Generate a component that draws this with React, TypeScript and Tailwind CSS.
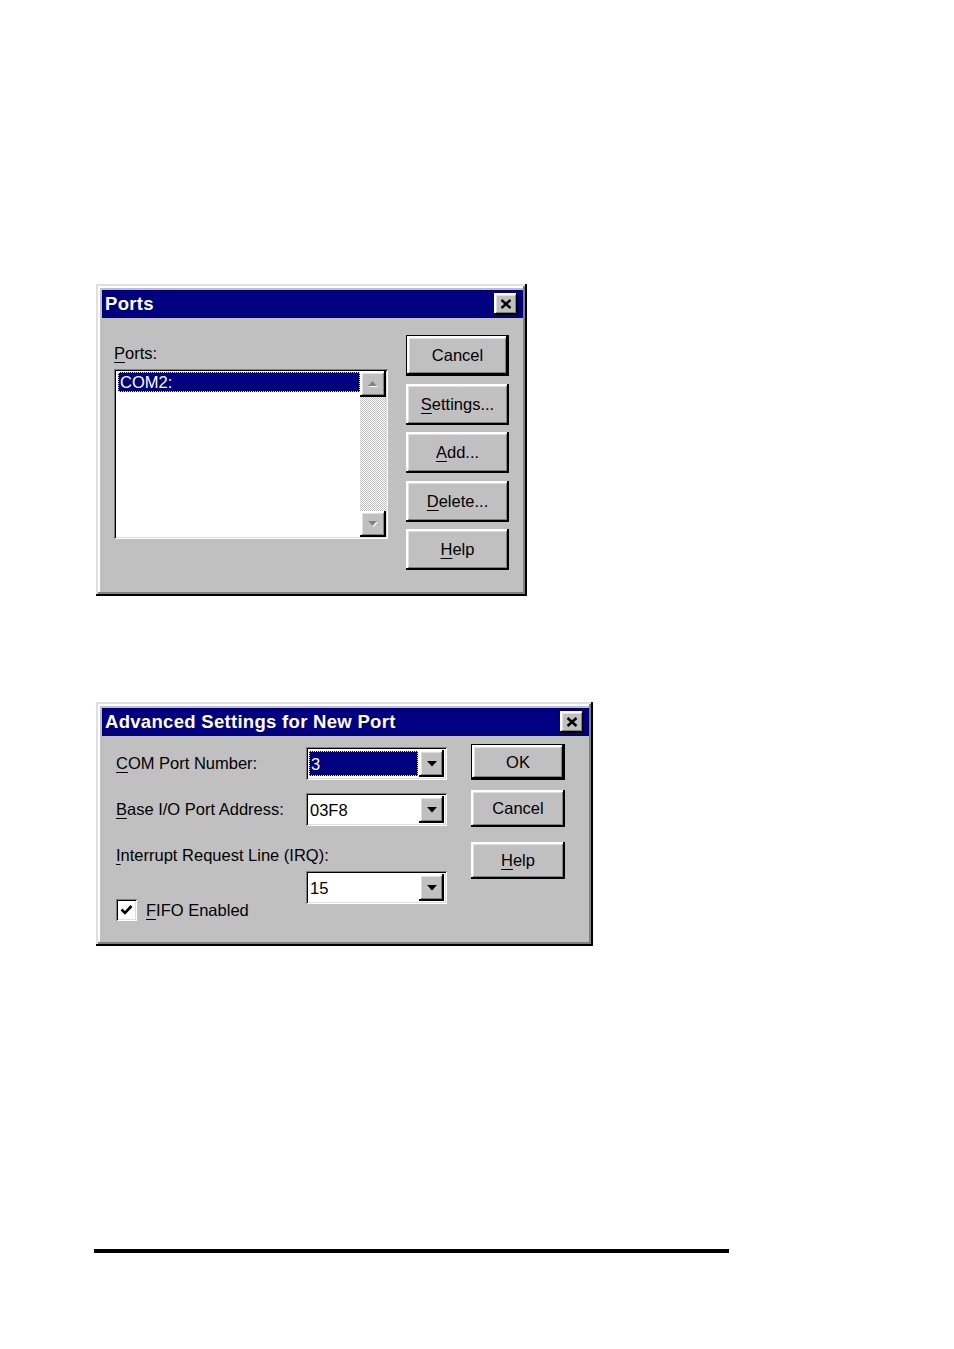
const raised =
  "shadow-[inset_-2px_-2px_0_#000,inset_2px_2px_0_#fff,inset_-3px_-3px_0_#808080,inset_3px_3px_0_#dfdfdf]";
const sunken =
  "shadow-[inset_1px_1px_0_#808080,inset_-1px_-1px_0_#fff,inset_2px_2px_0_#000,inset_-2px_-2px_0_#dfdfdf]";
const frame =
  "shadow-[inset_-2px_-2px_0_#000,inset_2px_2px_0_#dfdfdf,inset_-4px_-4px_0_#808080,inset_4px_4px_0_#fff]";

const U = ({ children }: { children: string }) => (
  <span className="underline underline-offset-[3px] decoration-1">{children}</span>
);

const CloseButton = () => (
  <div className={`w-[24px] h-[22px] bg-[#c0c0c0] flex items-center justify-center ${raised}`}>
    <svg width="12" height="10" viewBox="0 0 12 10">
      <path d="M1.5 1 L10.5 9 M10.5 1 L1.5 9" stroke="#000" strokeWidth="2.4" />
    </svg>
  </div>
);

const TitleBar = ({ title }: { title: string }) => (
  <div className="h-[28px] bg-[#000080] flex items-center justify-between pl-[3px] pr-[5px]">
    <span className="text-white font-bold text-[18.5px] leading-none tracking-[0.3px]">{title}</span>
    <CloseButton />
  </div>
);

const Button = ({
  children,
  className = "",
  isDefault = false,
}: {
  children: React.ReactNode;
  className?: string;
  isDefault?: boolean;
}) => (
  <div
    className={`bg-[#c0c0c0] flex items-center justify-center text-[16.5px] text-black ${
      isDefault ? "border border-black" : ""
    } ${className}`}
  >
    <div className={`w-full h-full flex items-center justify-center ${raised}`}>{children}</div>
  </div>
);

const ScrollArrow = ({ down = false }: { down?: boolean }) => (
  <div className={`h-[26px] bg-[#c0c0c0] flex items-center justify-center ${raised}`}>
    <svg width="12" height="8" viewBox="0 0 12 8">
      {down ? (
        <>
          <polygon points="2,2 11,2 6.5,7" fill="#fff" />
          <polygon points="1,1 10,1 5.5,6" fill="#808080" />
        </>
      ) : (
        <>
          <polygon points="2,7 11,7 6.5,2" fill="#fff" />
          <polygon points="1,6 10,6 5.5,1" fill="#808080" />
        </>
      )}
    </svg>
  </div>
);

const PortsDialog = () => (
  <div className={`w-[431px] h-[312px] bg-[#c0c0c0] pl-[6px] pt-[6px] pr-[4px] pb-[6px] ${frame}`}>
    <TitleBar title="Ports" />
    <div className="flex">
      {/* list */}
      <div className="ml-[12px] pt-[25px]">
        <div className="text-[16.5px] leading-[20px] text-black">
          <U>P</U>orts:
        </div>
        <div className={`mt-[6px] w-[274px] h-[170px] p-[2px] bg-white flex ${sunken}`}>
          <div className="flex-1 pt-[1px] pl-[2px]">
            <div className="h-[20px] bg-[#000080] border border-dotted border-[#ffff00] text-white text-[16.5px] leading-[18px] pl-[1px]">
              COM2:
            </div>
          </div>
          <div className="w-[26px] flex flex-col">
            <ScrollArrow />
            <div className="flex-1 bg-[repeating-conic-gradient(#c0c0c0_0%_25%,#ffffff_0%_50%)] bg-size-[2px_2px]" />
            <ScrollArrow down />
          </div>
        </div>
      </div>

      {/* buttons */}
      <div className="ml-[18px] pt-[17px] flex flex-col gap-[7.5px]">
        <Button isDefault className="w-[103px] h-[41px]">
          Cancel
        </Button>
        <Button className="w-[103px] h-[41px]">
          <U>S</U>ettings...
        </Button>
        <Button className="w-[103px] h-[41px]">
          <U>A</U>dd...
        </Button>
        <Button className="w-[103px] h-[41px]">
          <U>D</U>elete...
        </Button>
        <Button className="w-[103px] h-[41px]">
          <U>H</U>elp
        </Button>
      </div>
    </div>
  </div>
);

const Combo = ({ value, focused = false, className = "" }: { value: string; focused?: boolean; className?: string }) => (
  <div className={`w-[141px] h-[33px] p-[3px] bg-white flex ${sunken} ${className}`}>
    <div className="flex-1 pr-[1px] py-[1px]">
      <div
        className={`h-full text-[16.5px] leading-[20px] flex items-center pl-[1px] ${
          focused ? "bg-[#000080] text-white border border-dotted border-[#ffff00]" : "text-black"
        }`}
      >
        {value}
      </div>
    </div>
    <div className={`w-[25px] h-full bg-[#c0c0c0] flex items-center justify-center ${raised}`}>
      <svg width="10" height="6" viewBox="0 0 10 6">
        <polygon points="0,0 10,0 5,5.5" fill="#000" />
      </svg>
    </div>
  </div>
);

const AdvancedDialog = () => (
  <div className={`w-[497px] h-[244px] bg-[#c0c0c0] pl-[6px] pt-[6px] pr-[4px] pb-[6px] ${frame}`}>
    <TitleBar title="Advanced Settings for New Port" />
    <div className="flex text-[16.5px] text-black">
      {/* labels */}
      <div className="ml-[14px] pt-[11px] w-[190px] flex flex-col whitespace-nowrap">
        <div className="h-[33px] flex items-center">
          <U>C</U>OM Port Number:
        </div>
        <div className="mt-[13px] h-[33px] flex items-center">
          <U>B</U>ase I/O Port Address:
        </div>
        <div className="mt-[19px] h-[20px] flex items-center">
          <U>I</U>nterrupt Request Line (IRQ):
        </div>
        <div className="mt-[34px] h-[22px] flex items-center">
          <div className={`w-[21px] h-[22px] bg-white flex items-center justify-center ${sunken}`}>
            <svg width="13" height="12" viewBox="0 0 13 12">
              <path d="M1.5 5.5 L5 9 L11.5 2" stroke="#000" strokeWidth="2.6" fill="none" />
            </svg>
          </div>
          <span className="ml-[9px]">
            <U>F</U>IFO Enabled
          </span>
        </div>
      </div>

      {/* combos */}
      <div className="pt-[11px] flex flex-col">
        <Combo value="3" focused />
        <Combo value="03F8" className="mt-[13px]" />
        <Combo value="15" className="mt-[45px]" />
      </div>

      {/* buttons */}
      <div className="ml-[24px] pt-[8px] flex flex-col">
        <Button isDefault className="w-[94px] h-[36px]">
          OK
        </Button>
        <Button className="mt-[10px] w-[94px] h-[37px]">Cancel</Button>
        <Button className="mt-[15px] w-[94px] h-[37px]">
          <U>H</U>elp
        </Button>
      </div>
    </div>
  </div>
);

export default function App() {
  return (
    <div className="w-[954px] h-[1349px] bg-white pt-[284px] font-['Liberation_Sans',Arial,sans-serif]">
      <div className="ml-[96px]">
        <PortsDialog />
      </div>
      <div className="ml-[96px] mt-[106px]">
        <AdvancedDialog />
      </div>
      <div className="ml-[94px] mt-[303px] w-[635px] h-[4px] bg-black" />
    </div>
  );
}
